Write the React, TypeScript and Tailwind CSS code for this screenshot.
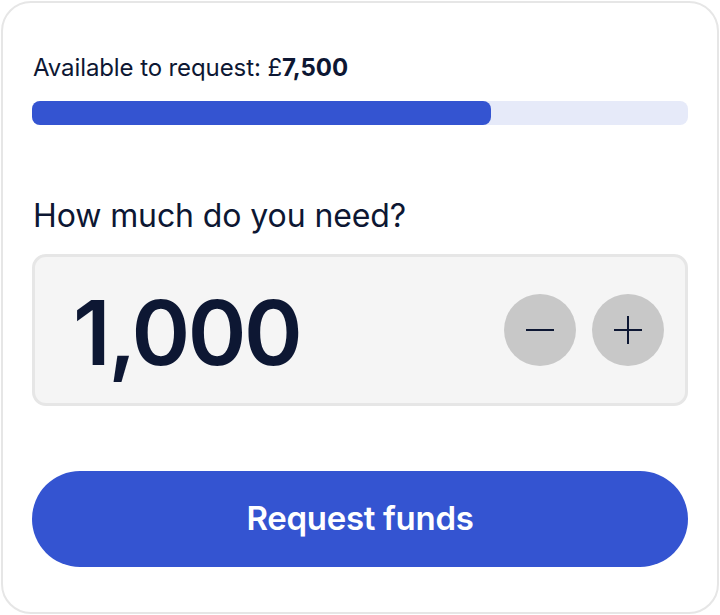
import React from "react";

export default function App() {
  return (
    <div className="w-[720px] h-[615px] bg-white" style={{ fontFamily: "Inter, 'Noto Sans', sans-serif" }}>
      <div className="w-[718px] h-[613px] m-px border-2 border-[#e6e6e6] rounded-[30px] px-[29px] pt-[50px] flex flex-col">
        <div className="pl-px text-[24px] leading-[30px] text-[#0d1733] tracking-[-0.1px]">
          Available to request: £<span className="font-bold">7,500</span>
        </div>
        <div className="mt-[18px] h-[24px] w-full rounded-[8px] bg-[#e6eaf9] flex">
          <div className="h-full w-[459px] rounded-[8px] bg-[#3454d1]" />
        </div>
        <div className="mt-[72px] pl-px text-[32px] leading-[38px] text-[#0d1733] tracking-[-0.1px]">How much do you need?</div>
        <div className="mt-[19px] h-[152px] w-full rounded-[14px] border-[3px] border-[#e6e6e6] bg-[#f5f5f5] flex items-center pl-[38px] pr-[21px]">
          <div className="flex-1 text-[89px] leading-none font-semibold text-[#0d1733] tracking-[-2.5px] mt-[4px]">1,000</div>
          <div className="flex gap-[16px]">
            <button className="w-[72px] h-[72px] rounded-full bg-[#c8c8c8] flex items-center justify-center">
              <svg width="30" height="30" viewBox="0 0 30 30"><path d="M1 15h28" stroke="#0d1733" strokeWidth="2" /></svg>
            </button>
            <button className="w-[72px] h-[72px] rounded-full bg-[#c8c8c8] flex items-center justify-center">
              <svg width="30" height="30" viewBox="0 0 30 30"><path d="M1 15h28M15 1v28" stroke="#0d1733" strokeWidth="2" /></svg>
            </button>
          </div>
        </div>
        <button className="mt-[65px] h-[96px] w-full rounded-full bg-[#3454d1] text-white text-[33px] font-semibold tracking-[-0.3px]">
          Request funds
        </button>
      </div>
    </div>
  );
}
